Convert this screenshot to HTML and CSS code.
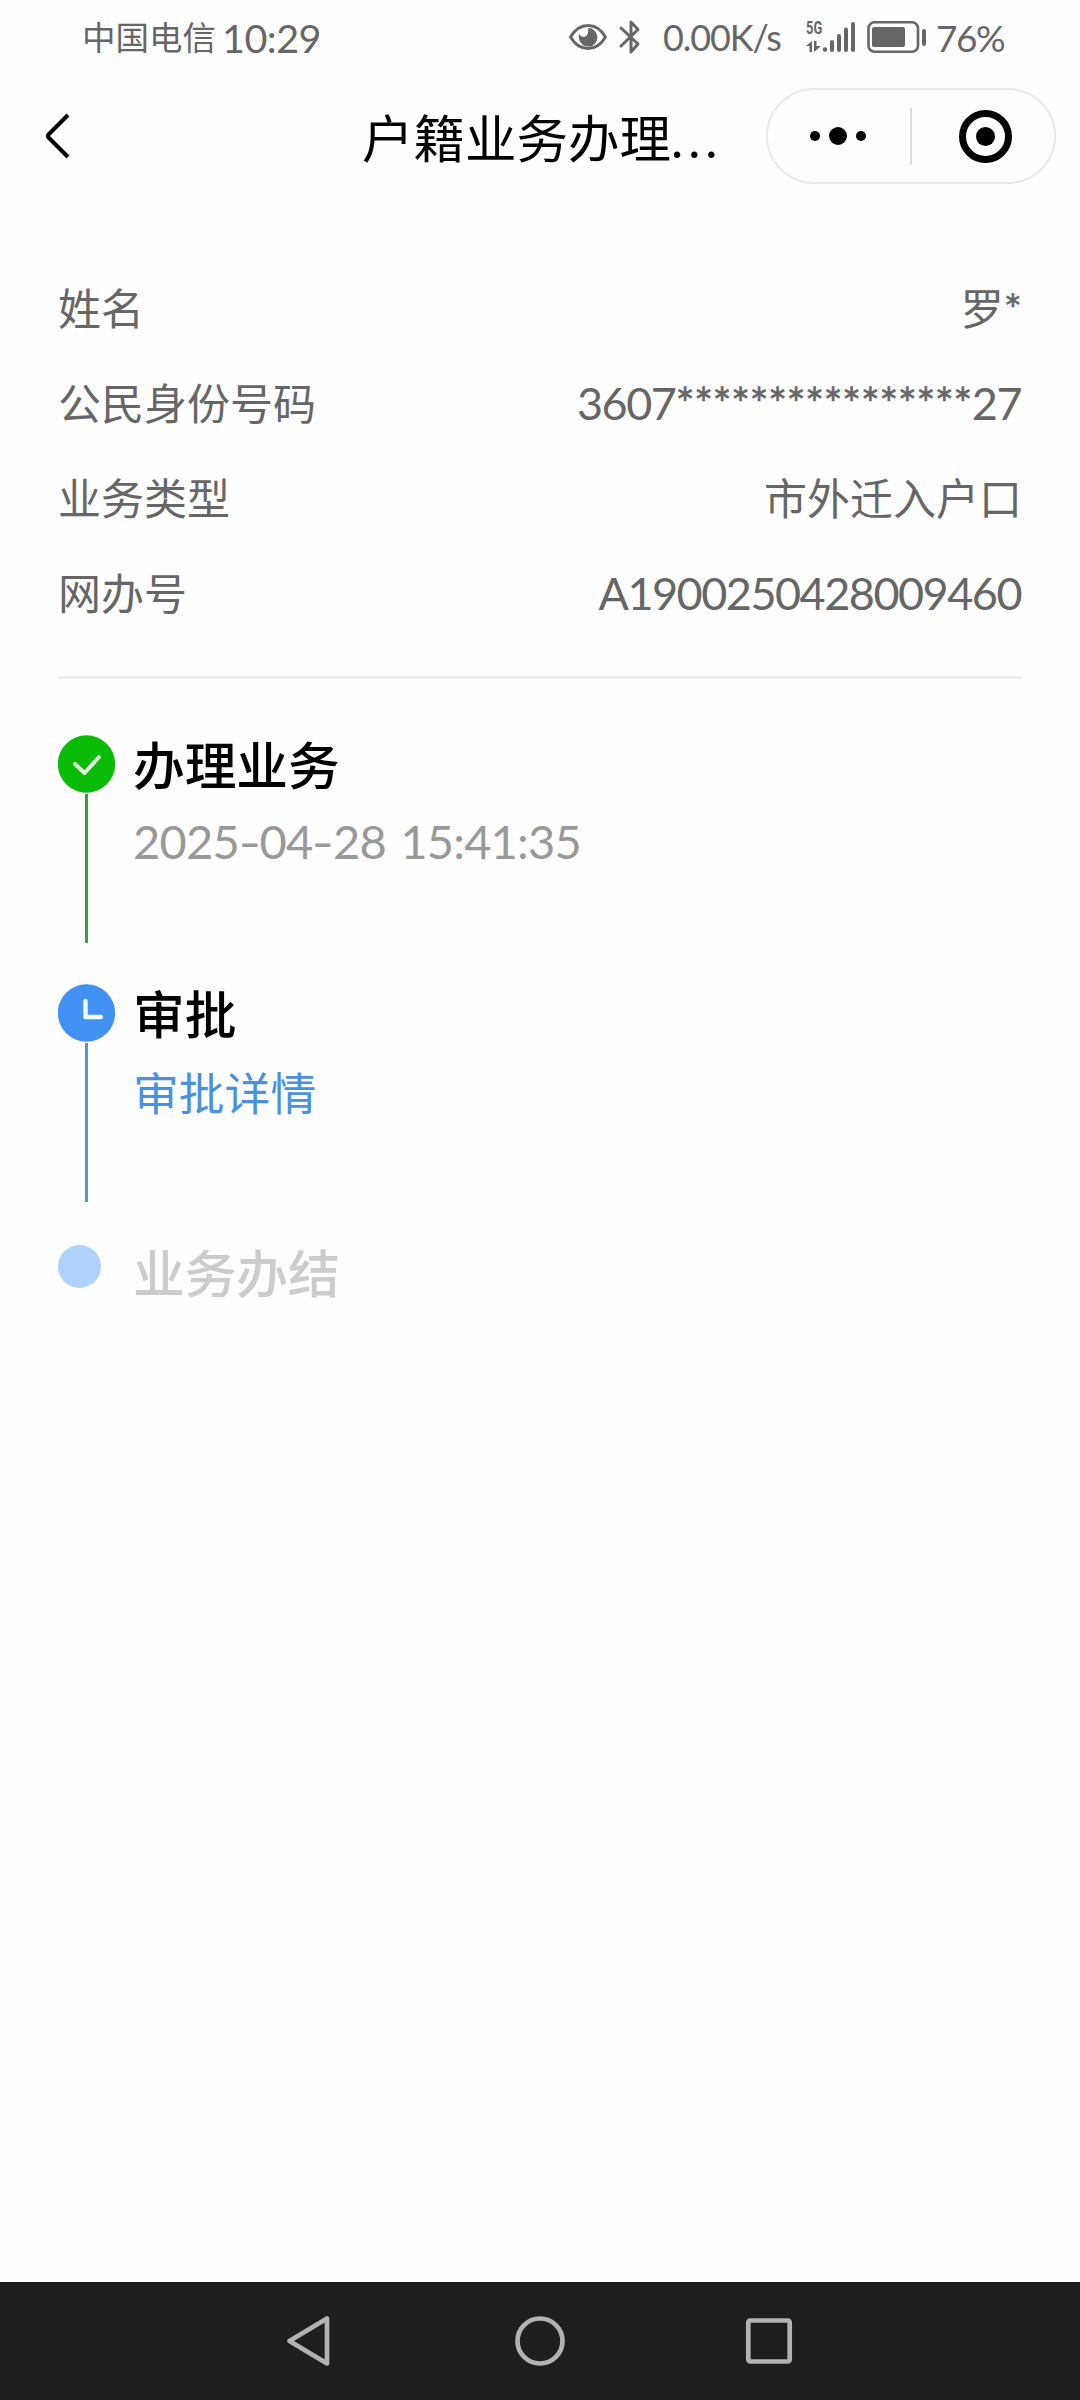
FILE: index.html
```html
<!DOCTYPE html>
<html lang="zh-CN">
<head>
  <meta charset="UTF-8">
  <meta name="viewport" content="width=device-width, initial-scale=1.0">
  <title>户籍业务办理</title>
  <link rel="stylesheet" href="styles.css">
</head>
<body>
  <div class="status-bar">
    <span class="carrier">中国电信</span>
    <span class="clock">10:29</span>
    <svg class="eye" width="40" height="28" viewBox="0 0 40 28">
      <path d="M2.5 14C6 8 12 2.5 20 2.5S34 8 37.5 14C34 20 28 25.5 20 25.5S6 20 2.5 14Z" fill="none" stroke="#666" stroke-width="3" stroke-linejoin="round"/>
      <path d="M20 5a9.300 9.300 0 1 1-9 11 6 6 0 0 1 .3-5c1.500 2.500 4 3.500 6 2.500 2.500-1.200 3.500-4.500 2.700-8.500Z" fill="#666"/>
    </svg>
    <svg class="bluetooth" width="24" height="36" viewBox="0 0 24 36">
      <path d="M3 9 20 25 13 33V3L20 10.500 3 27" fill="none" stroke="#666" stroke-width="3" stroke-linejoin="round" stroke-linecap="round"/>
    </svg>
    <span class="speed">0.00K/s</span>
    <div class="signal">
      <span class="network">5G</span>
      <svg width="51" height="32" viewBox="0 0 51 32">
        <g fill="#666">
          <path d="M0 25 6 20V31H3.500V25ZM8 20H10.500V25H15L8 31Z"/>
          <circle cx="19" cy="28.500" r="2.200"/>
          <rect x="24" y="19" width="4" height="12" rx="2"/>
          <rect x="31" y="13" width="4" height="18" rx="2"/>
          <rect x="38" y="6.500" width="4" height="24.500" rx="2"/>
          <rect x="45" y="1" width="4" height="30" rx="2"/>
        </g>
      </svg>
    </div>
    <svg class="battery" width="60" height="34" viewBox="0 0 60 34">
      <rect x="1.500" y="2.300" width="49.500" height="29.500" rx="6" fill="none" stroke="#666" stroke-width="2.600"/>
      <rect x="5" y="7" width="33" height="20" rx="2" fill="#666"/>
      <rect x="55" y="9" width="4" height="17" rx="2" fill="#666"/>
    </svg>
    <span class="percent">76%</span>
  </div>

  <div class="header">
    <svg class="back" width="30" height="50" viewBox="0 0 30 50">
      <path d="M24 4 4.500 23.500Q3 25 4.500 26.500L24 46" fill="none" stroke="#000" stroke-width="4"/>
    </svg>
    <h1>户籍业务办理<span class="dots">...</span></h1>
    <div class="capsule">
      <svg width="286" height="92" viewBox="0 0 286 92">
        <circle cx="47" cy="46" r="5"/>
        <circle cx="70" cy="46" r="9"/>
        <circle cx="93" cy="46" r="5"/>
        <path d="M143 18V75" stroke="#ddd" stroke-width="2"/>
        <circle cx="217.500" cy="46.500" r="23" fill="none" stroke="#000" stroke-width="7"/>
        <circle cx="217.500" cy="46.500" r="9.500"/>
      </svg>
    </div>
  </div>

  <div class="container">
    <div class="info">
      <div class="row"><span>姓名</span><span>罗<span class="star">*</span></span></div>
      <div class="row"><span>公民身份号码</span><span class="number">3607<span class="stars">****************</span>27</span></div>
      <div class="row"><span>业务类型</span><span>市外迁入户口</span></div>
      <div class="row"><span>网办号</span><span class="number">A1900250428009460</span></div>
    </div>

    <div class="step done">
      <div class="marker">
        <svg width="58" height="58" viewBox="0 0 58 58">
          <circle cx="28.500" cy="29" r="28.700" fill="#09bb07"/>
          <path d="M17 29 26.500 38 41 22" fill="none" stroke="#e4ffe0" stroke-width="4" stroke-linecap="round" stroke-linejoin="round"/>
        </svg>
        <div class="line"></div>
      </div>
      <div class="content">
        <h2>办理业务</h2>
        <p class="time">2025<i>-</i>04<i>-</i>28 15:41:35</p>
      </div>
    </div>

    <div class="step current">
      <div class="marker">
        <svg width="58" height="58" viewBox="0 0 58 58">
          <circle cx="28.500" cy="29" r="28.700" fill="#4191f5"/>
          <path d="M27.500 17V33H43" fill="none" stroke="#edfbff" stroke-width="4.400" stroke-linecap="round" stroke-linejoin="round"/>
        </svg>
        <div class="line"></div>
      </div>
      <div class="content">
        <h2>审批</h2>
        <a class="detail" href="#">审批详情</a>
      </div>
    </div>

    <div class="step waiting">
      <div class="marker"><div class="dot"></div></div>
      <div class="content">
        <h2>业务办结</h2>
      </div>
    </div>
  </div>

  <div class="nav-bar">
    <svg width="50" height="56" viewBox="0 0 50 56">
      <path d="M6.500 28 44 5.500V50.500Z"/>
    </svg>
    <svg width="56" height="56" viewBox="0 0 56 56">
      <circle cx="29" cy="28" r="22.500"/>
    </svg>
    <svg width="50" height="56" viewBox="0 0 50 56">
      <rect x="4.300" y="7.500" width="41.400" height="41" rx="2"/>
    </svg>
  </div>
</body>
</html>
```

FILE: styles.css
```css
* {
  box-sizing: border-box;
}
body {
  margin: 0;
  height: 2400px;
  display: flex;
  flex-direction: column;
  background-color: #fefefe;
  color: #666;
  font-family: Lato, "Noto Sans CJK SC", sans-serif;
  overflow: hidden;
}
h1, h2, p {
  margin: 0;
}
svg {
  display: block;
  flex: none;
}

/* status bar */
.status-bar {
  height: 74px;
  display: flex;
  align-items: center;
  padding-left: 82px;
  white-space: nowrap;
}
.carrier {
  width: 140px;
  font-size: 33.500px;
  line-height: 40px;
  padding-bottom: 1px;
}
.clock {
  width: 346px;
  font-size: 39.500px;
  letter-spacing: -0.5px;
}
.eye {
  margin-right: 10px;
}
.bluetooth {
  margin-right: 21px;
}
.speed {
  width: 143px;
  font-size: 36px;
  letter-spacing: -1.1px;
}
.signal {
  position: relative;
  width: 61px;
}
.network {
  position: absolute;
  left: 0;
  top: 0;
  font-family: Roboto, sans-serif;
  font-size: 19px;
  font-weight: 700;
  line-height: 14px;
  transform: scaleX(0.68);
  transform-origin: left;
}
.battery {
  margin-right: 9px;
}
.percent {
  font-size: 37px;
  letter-spacing: -1.500px;
}

/* header */
.header {
  height: 126px;
  display: flex;
  align-items: center;
  padding: 0 24px 2px 44px;
}
.back {
  margin-right: 288px;
}
h1 {
  width: 404px;
  padding-top: 4px;
  color: #000;
  font-size: 51.500px;
  font-weight: 400;
  line-height: 76px;
  white-space: nowrap;
}
.dots {
  letter-spacing: 5px;
}
.capsule {
  width: 290px;
  height: 96px;
  border: 2px solid #e9e9e9;
  border-radius: 48px;
}

/* page content */
.container {
  flex: 1;
  padding: 61px 58px 0;
}
.info {
  height: 418px;
  margin-bottom: 56px;
  border-bottom: 3px solid #eee;
}
.row {
  height: 95px;
  display: flex;
  justify-content: space-between;
  align-items: center;
  font-size: 43px;
  line-height: 95px;
}
.number {
  margin-right: 1px;
  font-size: 45px;
  letter-spacing: -1.500px;
}
.star, .stars {
  -webkit-text-stroke: 0.6px #666;
}
.stars {
  letter-spacing: -0.600px;
}
.step {
  display: flex;
}
.marker {
  width: 75px;
}
.line {
  width: 3px;
  margin: 1px 0 0 27px;
}
.done {
  height: 249px;
}
.done .line {
  height: 149px;
  background-color: #3b9e3d;
}
.current {
  height: 261px;
}
.current .line {
  height: 159px;
  background-color: #5a94cd;
}
h2 {
  color: #000;
  font-size: 51.700px;
  font-weight: 500;
  line-height: 60px;
}
.time {
  margin-top: 16px;
  color: #999;
  font-size: 47px;
  line-height: 60px;
  letter-spacing: -0.8px;
  word-spacing: 3px;
}
/* wider dash between the date parts */
.time i {
  display: inline-block;
  padding: 0 2px;
  font-style: normal;
  transform: scaleX(1.3);
}
.detail {
  display: block;
  margin-top: 20px;
  color: #4a90e2;
  font-size: 45.800px;
  line-height: 60px;
  text-decoration: none;
}
.dot {
  width: 43px;
  height: 43px;
  border-radius: 50%;
  background-color: #b0d1fb;
}
.waiting h2 {
  margin-top: -2px;
  color: #ccc;
}

/* system navigation */
.nav-bar {
  height: 118px;
  display: flex;
  justify-content: space-between;
  padding: 31px 286px 0 283px;
  background-color: #1e1e1e;
}
.nav-bar svg {
  fill: none;
  stroke: #b2b2b2;
  stroke-width: 4.700;
  stroke-linejoin: round;
}
```
